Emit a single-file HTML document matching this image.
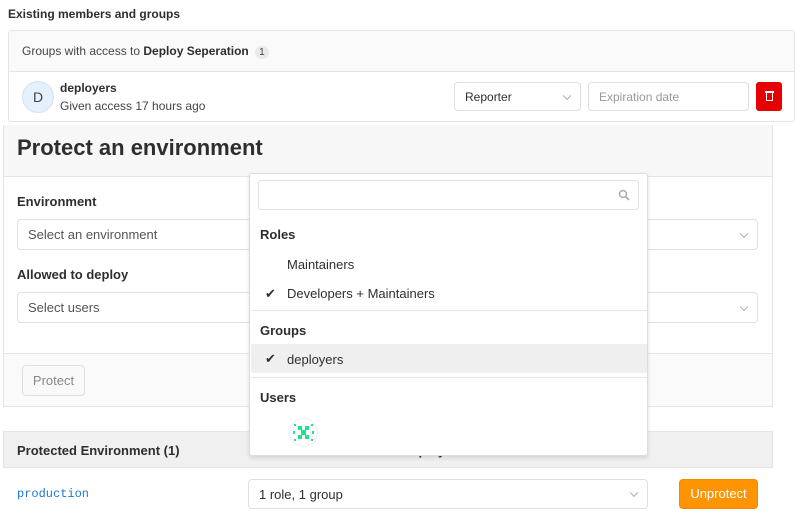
<!DOCTYPE html>
<html><head><style>
*{box-sizing:border-box;margin:0;padding:0}
body{width:800px;height:523px;background:#fff;font-family:"Liberation Sans",sans-serif;color:#2e2e2e;position:relative;overflow:hidden;font-size:13px}
.a{position:absolute}
.sel{position:absolute;border:1px solid #dfdfdf;border-radius:4px;background:#fff;padding-left:10px;display:flex;align-items:center;font-size:13px;color:#2e2e2e}
.chev{position:absolute;right:10px;top:50%;width:6px;height:6px;border-right:1px solid #aaa;border-bottom:1px solid #aaa;transform:translateY(-70%) rotate(45deg)}
b{font-weight:bold}
</style></head><body>
<div class="a" style="left:8px;top:7px;font-size:12px;font-weight:bold">Existing members and groups</div>
<div class="a" style="left:8px;top:30px;width:787px;height:92px;border:1px solid #e5e5e5;border-radius:3px">
 <div style="height:41px;background:#fafafa;border-bottom:1px solid #e5e5e5;padding:13px 0 0 13px;font-size:12px;color:#444">Groups with access to <b style="color:#2e2e2e">Deploy Seperation</b> <span style="display:inline-block;background:#eaeaea;border-radius:8px;padding:1px 4px;font-size:10px;margin-left:3px">1</span></div>
 <div class="a" style="left:13px;top:50px;width:32px;height:32px;border-radius:50%;background:#e4f0fb;border:1px solid #d3e3f3;text-align:center;line-height:30px;font-size:14px;color:#444">D</div>
 <div class="a" style="left:51px;top:50px;font-weight:bold;font-size:12px">deployers</div>
 <div class="a" style="left:51px;top:68px;font-size:12px;color:#444">Given access 17 hours ago</div>
</div>
<div class="sel" style="left:454px;top:82px;width:127px;height:29px;font-size:12px">Reporter<span class="chev"></span></div>
<div class="sel" style="left:588px;top:82px;width:161px;height:29px;font-size:12px;color:#999">Expiration date</div>
<div class="a" style="left:756px;top:82px;width:26px;height:29px;background:#e60000;border-radius:3px"><div style="position:absolute;left:10px;top:11px;width:7px;height:8px;border:1.5px solid #fff;border-top:none"></div><div style="position:absolute;left:9px;top:9px;width:9px;height:1.5px;background:#fff"></div></div>

<div class="a" style="left:3px;top:125px;width:770px;height:282px;border:1px solid #e5e5e5;border-top:none">
 <div style="height:52px;background:#f7f7f7;border-bottom:1px solid #e5e5e5;padding:10px 0 0 13px;font-size:22px;font-weight:bold;color:#2e2e2e">Protect an environment</div>
 <div class="a" style="left:13px;top:69px;font-weight:bold">Environment</div>
 <div class="a" style="left:13px;top:142px;font-weight:bold">Allowed to deploy</div>
 <div class="a" style="left:0;top:228px;width:768px;height:53px;background:#fafafa;border-top:1px solid #e5e5e5"></div>
 <div class="a" style="left:18px;top:240px;width:63px;height:31px;border:1px solid #dfdfdf;border-radius:4px;background:#f9f9f9;color:#888;text-align:center;line-height:29px">Protect</div>
</div>
<div class="sel" style="left:17px;top:219px;width:741px;height:31px;color:#555">Select an environment<span class="chev"></span></div>
<div class="sel" style="left:17px;top:292px;width:741px;height:31px;color:#555">Select users<span class="chev"></span></div>

<div class="a" style="left:3px;top:431px;width:770px;height:37px;background:#f0f0f0;border:1px solid #e5e5e5;padding:11px 0 0 13px;font-weight:bold">Protected Environment (1)<span style="position:absolute;left:330px;font-weight:bold">Allowed to deploy</span></div>
<div class="a" style="left:17px;top:487px;font-family:'Liberation Mono',monospace;color:#1f78d1;font-size:12px">production</div>
<div class="sel" style="left:248px;top:479px;width:400px;height:30px">1 role, 1 group<span class="chev"></span></div>
<div class="a" style="left:679px;top:479px;width:79px;height:30px;background:#fc9403;border:1px solid #f08a00;border-radius:4px;color:#fff;text-align:center;line-height:28px">Unprotect</div>

<div class="a" style="left:249px;top:173px;width:399px;height:283px;background:#fff;border:1px solid #ddd;border-radius:3px;box-shadow:0 2px 4px rgba(0,0,0,.12)">
 <div class="a" style="left:8px;top:6px;width:381px;height:30px;border:1px solid #dfdfdf;border-radius:3px">
  <svg class="a" style="right:8px;top:8px" width="12" height="12" viewBox="0 0 12 12"><circle cx="5" cy="5" r="3.5" fill="none" stroke="#aaa" stroke-width="1.5"/><path d="M7.5 7.5L11 11" stroke="#aaa" stroke-width="1.7"/></svg>
 </div>
 <div class="a" style="left:10px;top:53px;font-weight:bold">Roles</div>
 <div class="a" style="left:37px;top:83px">Maintainers</div>
 <div class="a" style="left:15px;top:112px">✔</div>
 <div class="a" style="left:37px;top:112px">Developers + Maintainers</div>
 <div class="a" style="left:0;top:136px;width:397px;border-top:1px solid #e5e5e5"></div>
 <div class="a" style="left:10px;top:149px;font-weight:bold">Groups</div>
 <div class="a" style="left:1px;top:170px;width:396px;height:29px;background:#efefef"></div>
 <div class="a" style="left:15px;top:177px">✔</div>
 <div class="a" style="left:37px;top:178px">deployers</div>
 <div class="a" style="left:0;top:203px;width:397px;border-top:1px solid #e5e5e5"></div>
 <div class="a" style="left:10px;top:216px;font-weight:bold">Users</div>
 <svg class="a" style="left:39px;top:244px" width="29" height="29" viewBox="0 0 29 29"><circle cx="14.5" cy="14.5" r="14" fill="#fff" stroke="#eee"/><g fill="#1de38a"><rect x="9" y="8" width="4" height="4"/><rect x="16" y="8" width="4" height="4"/><rect x="12" y="12" width="5" height="5"/><rect x="9" y="17" width="4" height="4"/><rect x="16" y="17" width="4" height="4"/><rect x="5" y="6" width="2" height="2"/><rect x="22" y="6" width="2" height="2"/><rect x="5" y="21" width="2" height="2"/><rect x="22" y="21" width="2" height="2"/><rect x="4" y="13" width="2" height="3"/><rect x="23" y="13" width="2" height="3"/></g></svg>
</div>
</body></html>
